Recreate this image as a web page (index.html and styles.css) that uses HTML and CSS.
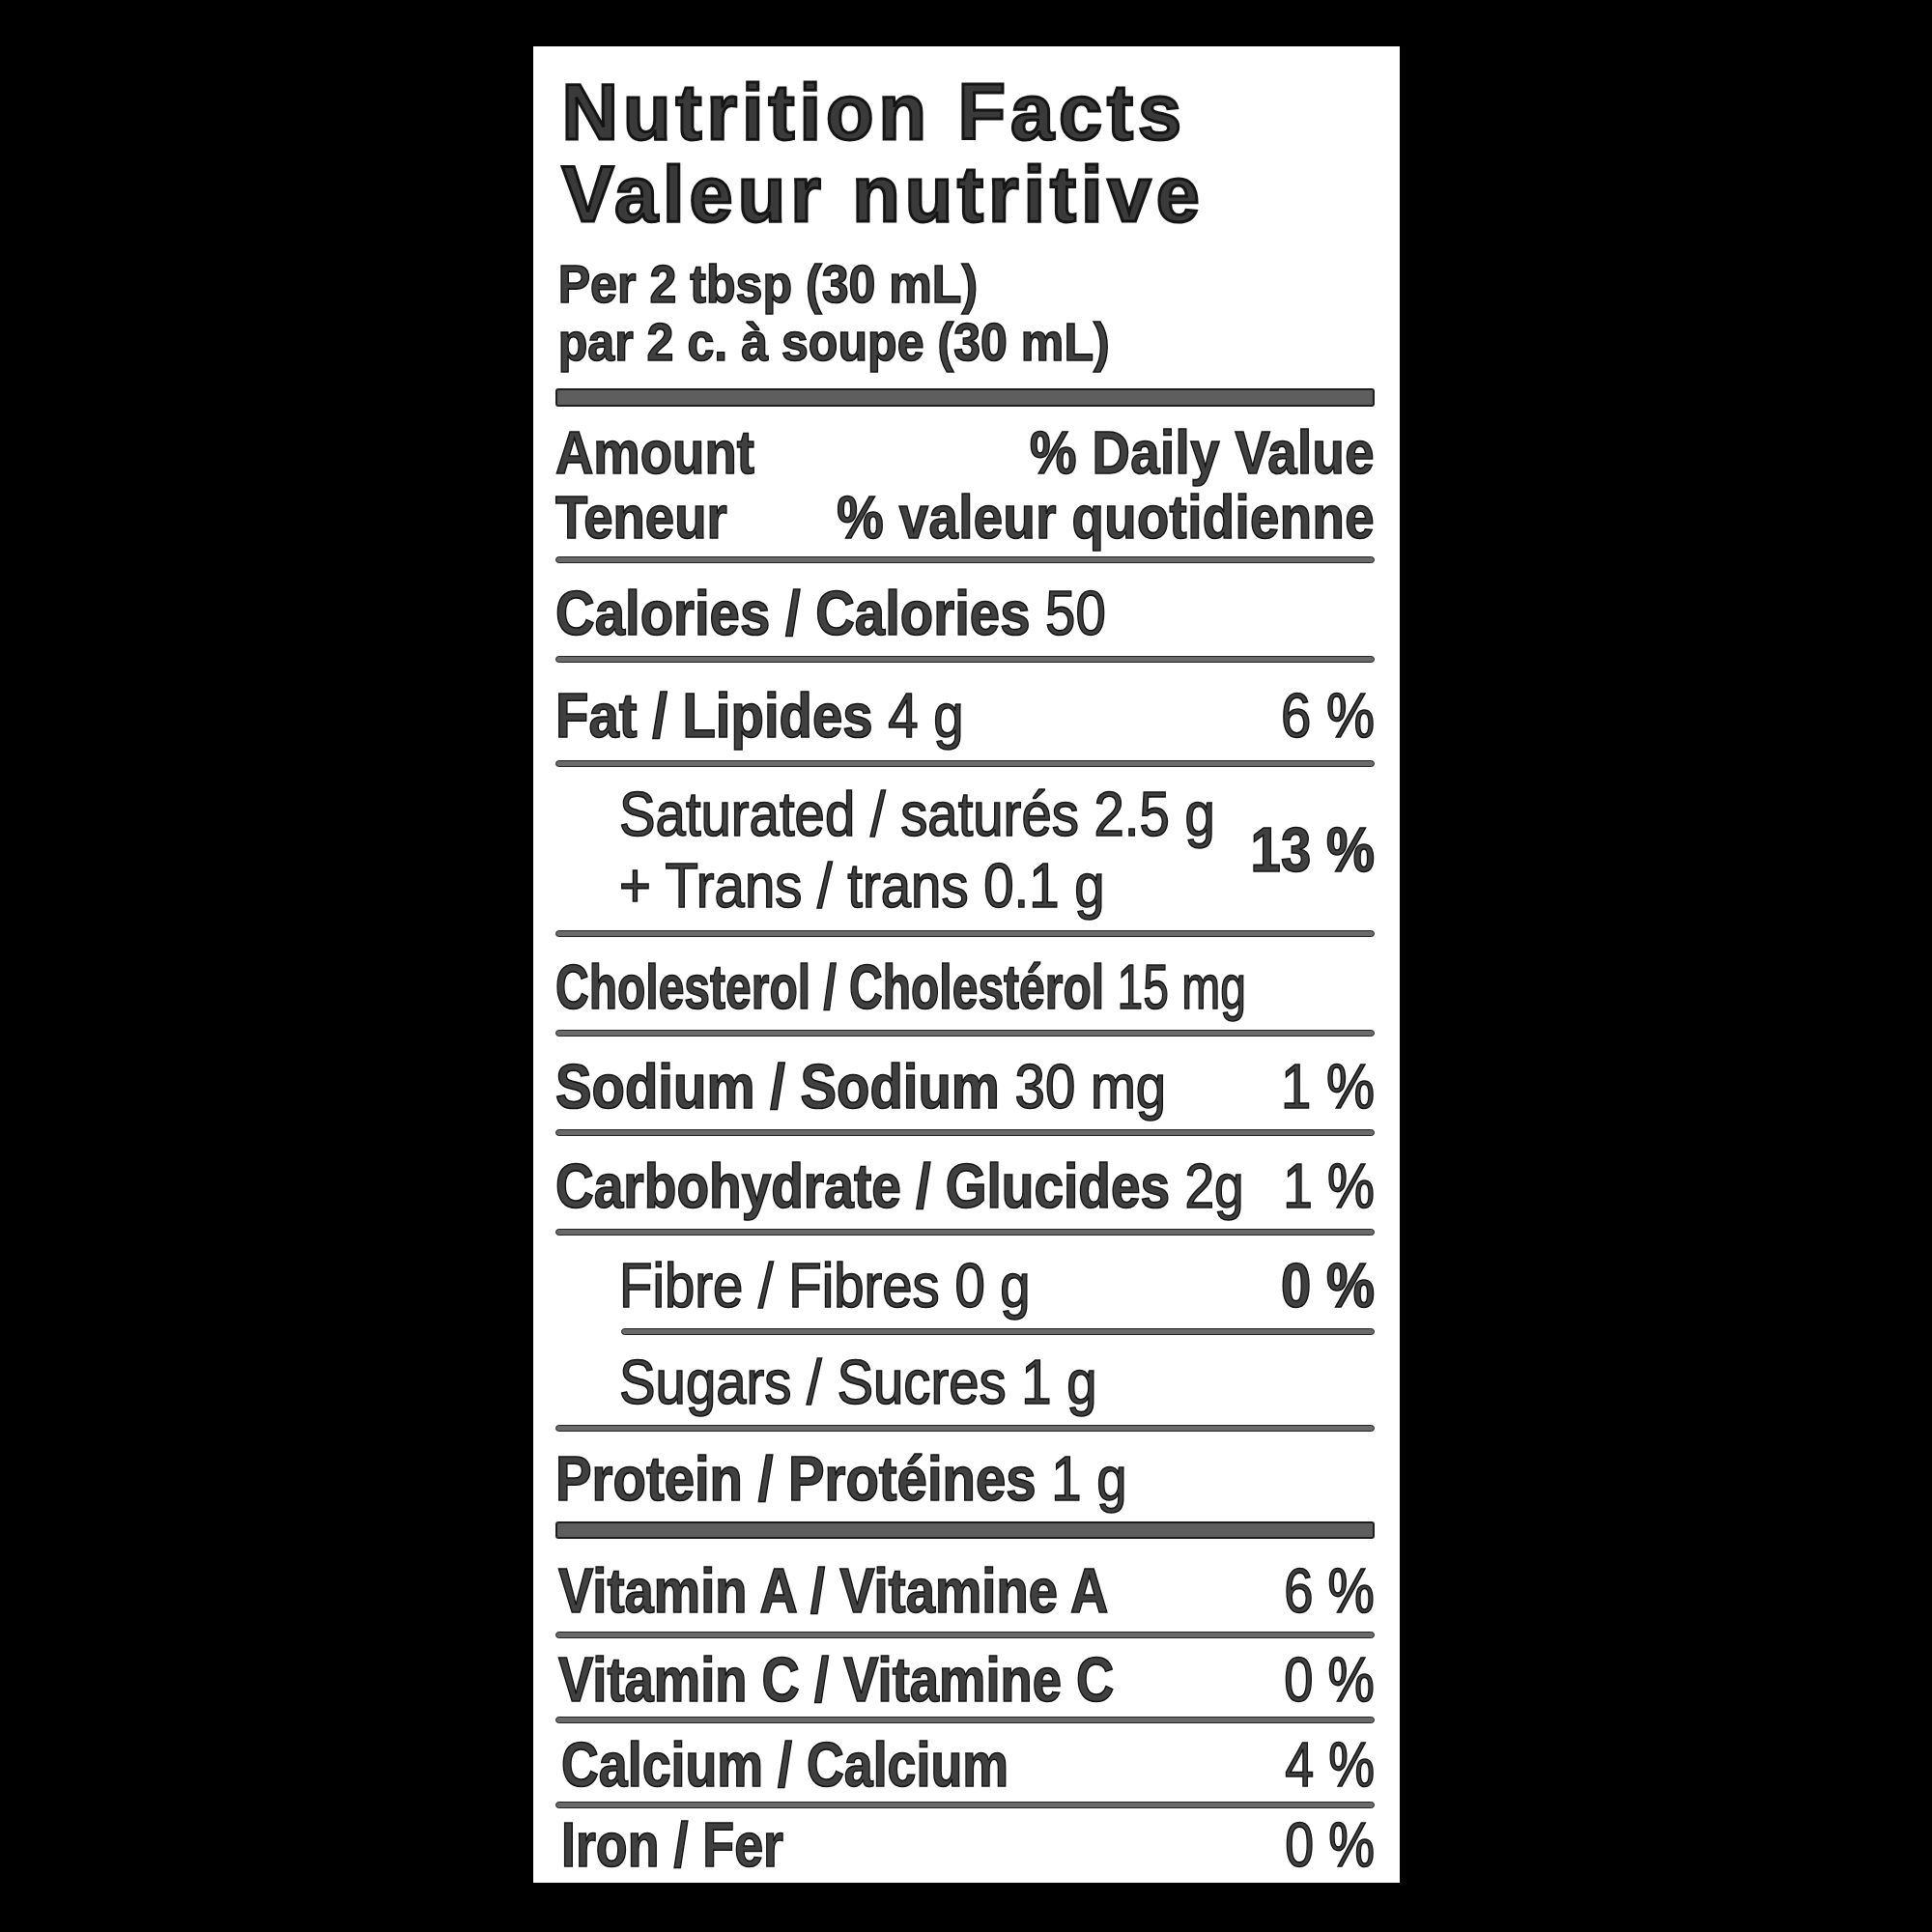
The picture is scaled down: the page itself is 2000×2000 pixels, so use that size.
FILE: index.html
```html
<!DOCTYPE html>
<html lang="en">
<head>
<meta charset="utf-8">
<title>Nutrition Facts</title>
<link rel="stylesheet" href="styles.css">
</head>
<body>
<div class="label">
  <div class="title">Nutrition Facts<br>Valeur nutritive</div>
  <div class="serving">Per 2 tbsp (30 mL)<br>par 2 c. à soupe (30 mL)</div>
  <div class="bar-thick"></div>
  <div class="head">
    <div class="head-line"><span>Amount</span><span>% Daily Value</span></div>
    <div class="head-line"><span>Teneur</span><span>% valeur quotidienne</span></div>
  </div>
  <div class="rule"></div>
  <div class="row"><span class="name"><b>Calories / Calories</b> 50</span></div>
  <div class="rule"></div>
  <div class="row sp-lg"><span class="name"><b>Fat / Lipides</b> 4 g</span><span class="dv">6 %</span></div>
  <div class="rule"></div>
  <div class="row sub two"><span class="name">Saturated / saturés 2.5 g<br>+ Trans / trans 0.1 g</span><span class="dv strong">13 %</span></div>
  <div class="rule"></div>
  <div class="row tight"><span class="name"><b>Cholesterol / Cholestérol</b> 15 mg</span></div>
  <div class="rule"></div>
  <div class="row"><span class="name"><b>Sodium / Sodium</b> 30 mg</span><span class="dv">1 %</span></div>
  <div class="rule"></div>
  <div class="row carb"><span class="name"><b>Carbohydrate / Glucides</b> 2g</span><span class="dv">1 %</span></div>
  <div class="rule"></div>
  <div class="row sub"><span class="name">Fibre / Fibres 0 g</span><span class="dv strong">0 %</span></div>
  <div class="rule indent"></div>
  <div class="row sub sp-sm"><span class="name">Sugars / Sucres 1 g</span></div>
  <div class="rule"></div>
  <div class="row sp-sm"><span class="name"><b>Protein / Protéines</b> 1 g</span></div>
  <div class="bar-thick bottom"></div>
  <div class="row vit first"><span class="name"><b>Vitamin A / Vitamine A</b></span><span class="dv">6 %</span></div>
  <div class="rule"></div>
  <div class="row vit"><span class="name"><b>Vitamin C / Vitamine C</b></span><span class="dv">0 %</span></div>
  <div class="rule"></div>
  <div class="row vit wide"><span class="name"><b>Calcium / Calcium</b></span><span class="dv">4 %</span></div>
  <div class="rule"></div>
  <div class="row vit wide last"><span class="name"><b>Iron / Fer</b></span><span class="dv">0 %</span></div>
</div>
</body>
</html>
```

FILE: styles.css
```css
html, body {
  margin: 0;
  background: #000;
}

.label {
  box-sizing: border-box;
  width: 897px;
  height: 1901px;
  margin: 48px auto 0;
  padding: 26px 26px 0 23px;
  background: #fff;
  color: #404040;
  font-family: "Liberation Sans", Arial, sans-serif;
  -webkit-text-stroke: 1.6px #111;
  overflow: hidden;
}

.title {
  font-weight: bold;
  font-size: 81px;
  line-height: 85px;
  letter-spacing: 5px;
  padding-left: 7px;
  color: #3a3a3a;
  -webkit-text-stroke: 3px #141414;
}

/* condensed blocks: laid out wide, then squeezed horizontally */
.serving,
.head,
.row {
  --sx: 0.88;
  box-sizing: border-box;
  width: calc(848px / var(--sx));
  transform: scaleX(var(--sx));
  transform-origin: 0 0;
}

.serving {
  --sx: 0.895;
  font-weight: bold;
  font-size: 56px;
  line-height: 60px;
  margin-top: 20px;
  padding-left: 3px;
}

.bar-thick {
  box-sizing: border-box;
  height: 19px;
  margin-top: 18px;
  background: #5e5e5e;
  border: 2px solid #1e1e1e;
  border-radius: 3px;
}

.bar-thick.bottom {
  height: 18px;
  margin-top: 0;
}

.head {
  --sx: 0.865;
  font-weight: bold;
  font-size: 63px;
  line-height: 67px;
  margin: 14px 0 7px;
}

.head-line {
  display: flex;
  justify-content: space-between;
}

.head-line span + span {
  letter-spacing: 0.5px;
}

.rule {
  box-sizing: border-box;
  height: 7px;
  background: #6a6a6a;
  border: 1.5px solid #222;
  border-radius: 4px;
}

.rule.indent {
  margin-left: 68px;
}

.row {
  display: flex;
  justify-content: space-between;
  align-items: center;
  font-size: 64px;
  line-height: 64px;
  padding: 20px 0 12px;
  white-space: nowrap;
}

.row b {
  font-weight: bold;
}

.row.sp-lg {
  padding: 23px 0 14px;
}

.row.sp-sm {
  padding-top: 17px;
}

.row.sub {
  padding-left: calc(66px / var(--sx));
}

.row.two {
  line-height: 74px;
  padding-top: 12px;
  padding-bottom: 9px;
}

.row.tight {
  --sx: 0.75;
}

.row.carb {
  --sx: 0.86;
}

.row.vit {
  --sx: 0.85;
  padding: 11px 0 6px calc(3px / var(--sx));
}

.row.vit.wide {
  --sx: 0.84;
  padding-left: calc(6px / var(--sx));
}

.row.vit.first {
  padding-top: 22px;
  padding-bottom: 10px;
}

.row.vit.last {
  padding-top: 6px;
  padding-bottom: 0;
}

.dv {
  white-space: pre;
}

.dv.strong {
  font-weight: bold;
}
```
